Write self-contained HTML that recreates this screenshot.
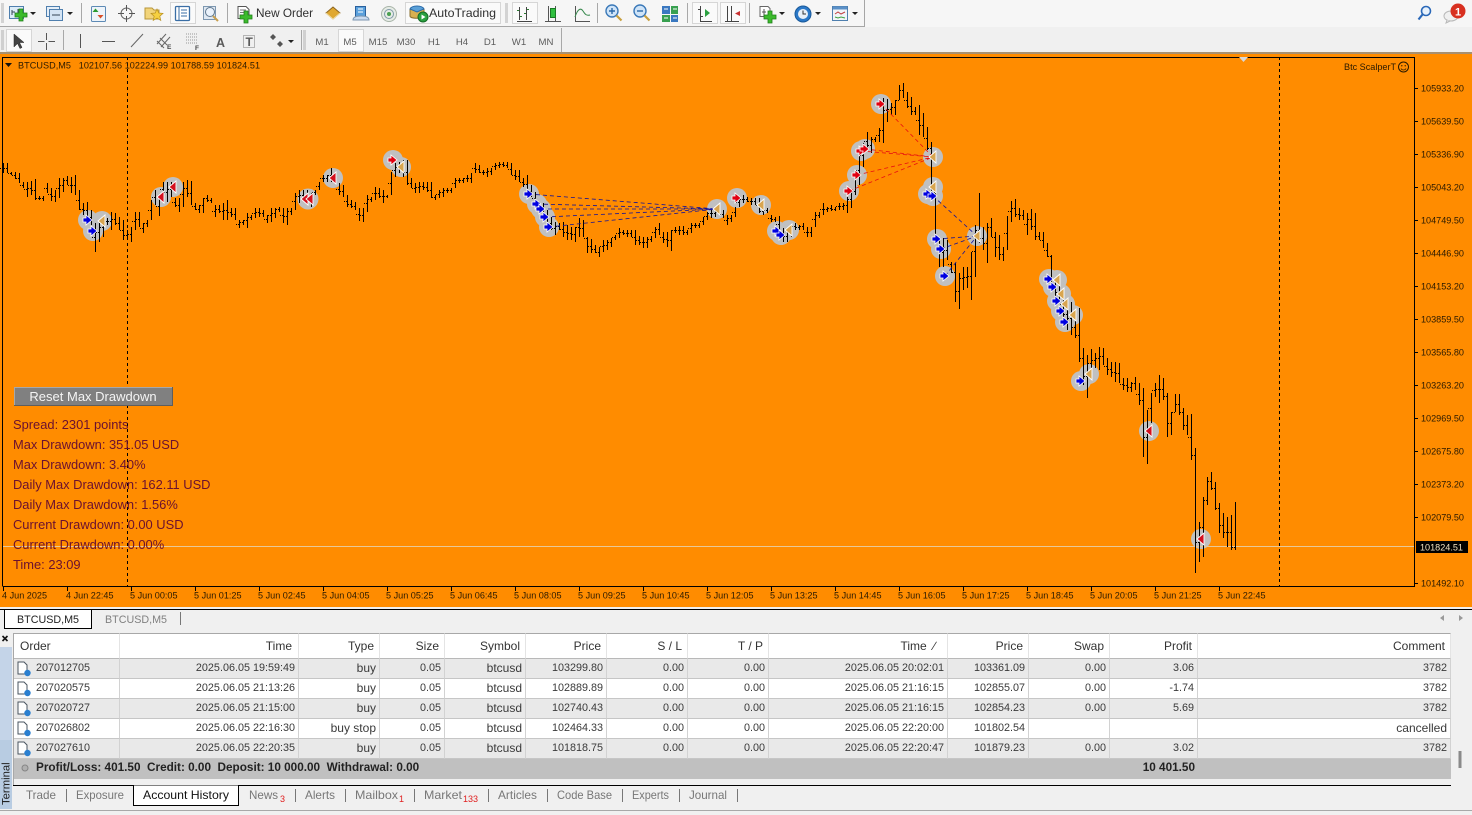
<!DOCTYPE html>
<html><head><meta charset="utf-8"><title>BTCUSD,M5</title>
<style>
html,body{margin:0;padding:0;width:1472px;height:815px;overflow:hidden;background:#f0f0f0;font-family:"Liberation Sans",Arial,sans-serif}
svg{position:absolute;left:0;top:0;display:block}
svg text{font-family:"Liberation Sans",Arial,sans-serif;white-space:pre}
.ax{font-size:9.1px;fill:#2a1a00}
.tf{font-size:9.6px;fill:#5c5c5c;text-anchor:middle}
.pn{font-size:12.9px;fill:#6a1030}
.tb{font-size:12px;fill:#777}
table{position:absolute;left:14px;top:633px;width:1437px;border-collapse:separate;border-spacing:0;table-layout:fixed;font-size:12px;color:#3a3a3a}
td,th{box-sizing:border-box;height:20px;padding:0 3px 0 0;text-align:right;font-weight:normal;border-right:1px solid #d2d2d2;border-bottom:1px solid #c6c6c6;white-space:pre;overflow:hidden;line-height:17px}
th{height:26px;background:#fff;border-top:1px solid #a8a8a8;border-right:1px solid #e4e4e4;border-bottom:1px solid #b8b8b8;padding-right:5px;color:#333;line-height:22px}
tr.g td{background:#e9e9e9}
tr.w td{background:#fff}
td.n{font-size:10.8px}
td.o{text-align:left;padding-left:22px;font-size:10.8px}
tr.s td{background:#c0c0c0;border:0;font-weight:bold;font-size:11.75px;color:#222;height:20px;line-height:18px;vertical-align:top}
</style></head><body>
<svg width="1472" height="815" viewBox="0 0 1472 815" xmlns="http://www.w3.org/2000/svg">
<defs>
<g id="ab"><path d="M-5-2h3v-3l6 5-6 5v-3h-3z" fill="#0000e0" stroke="#fff" stroke-width=".8"/></g>
<g id="ar"><path d="M-5-2h3v-3l6 5-6 5v-3h-3z" fill="#e00010" stroke="#fff" stroke-width=".8"/></g>
<g id="tt"><path d="M-4 0L3-6V6z" fill="#d8a550" stroke="#fff" stroke-width=".9"/></g>
<g id="tr"><path d="M-4 0L3-6V6z" fill="#d4101e" stroke="#fff" stroke-width=".9"/></g>
<g id="plus"><path d="M-2-6h4v4h4v4h-4v4h-4v-4h-4v-4h4z" fill="#3cbb2c" stroke="#1f7f1a" stroke-width=".8"/></g>
<g id="doc"><path d="M1 1h6l3 3v9H1z" fill="#fff" stroke="#4a5560"/><circle cx="10.500" cy="12" r="3.200" fill="#2a7fd0"/></g>
<g id="grip"><path d="M0 0h3M0 2h3M0 4h3M0 6h3M0 8h3M0 10h3M0 12h3M0 14h3M0 16h3M0 18h3" stroke="#b0b0b0" stroke-width="1"/></g>
<path id="lt" transform="translate(0,.5)" stroke="#000" fill="none" shape-rendering="crispEdges" d="M2 168h1M6 168h1M10 173h1M14 175h1M18 178h1M22 185h1M26 189h1M30 188h1M34 190h1M38 198h1M42 198h1M46 188h1M50 194h1M54 196h1M58 188h1M62 185h1M66 180h1M70 185h1M74 185h1M78 200h1M82 209h1M86 210h1M90 217h1M94 237h1M98 232h1M102 227h1M106 221h1M110 221h1M114 219h1M118 223h1M122 230h1M126 235h1M130 234h1M134 221h1M138 219h1M142 228h1M146 223h1M150 210h1M154 197h1M158 206h1M162 189h1M166 192h1M170 189h1M174 202h1M178 205h1M182 194h1M186 188h1M190 193h1M194 206h1M198 209h1M202 205h1M206 198h1M210 200h1M214 211h1M218 209h1M222 211h1M226 210h1M230 212h1M234 214h1M238 224h1M242 222h1M246 220h1M250 217h1M254 213h1M258 212h1M262 213h1M266 219h1M270 215h1M274 213h1M278 209h1M282 215h1M286 216h1M290 211h1M294 201h1M298 196h1M302 195h1M306 196h1M310 200h1M314 192h1M318 186h1M322 178h1M326 178h1M330 175h1M334 179h1M338 189h1M342 191h1M346 201h1M350 204h1M354 206h1M358 214h1M362 215h1M366 203h1M370 199h1M374 193h1M378 193h1M382 196h1M386 196h1M390 183h1M394 170h1M398 167h1M402 168h1M406 172h1M410 183h1M414 188h1M418 187h1M422 186h1M426 187h1M430 190h1M434 197h1M438 194h1M442 192h1M446 190h1M450 190h1M454 183h1M458 180h1M462 180h1M466 178h1M470 178h1M474 168h1M478 169h1M482 172h1M486 172h1M490 171h1M494 166h1M498 165h1M502 164h1M506 165h1M510 169h1M514 175h1M518 176h1M522 182h1M526 184h1M530 191h1M534 198h1M538 207h1M542 210h1M546 216h1M550 223h1M554 228h1M558 226h1M562 229h1M566 232h1M570 233h1M574 234h1M578 227h1M582 228h1M586 238h1M590 246h1M594 249h1M598 252h1M602 246h1M606 245h1M610 242h1M614 237h1M618 233h1M622 232h1M626 233h1M630 233h1M634 237h1M638 240h1M642 242h1M646 242h1M650 239h1M654 232h1M658 229h1M662 237h1M666 239h1M670 240h1M674 230h1M678 230h1M682 230h1M686 232h1M690 228h1M694 225h1M698 225h1M702 221h1M706 216h1M710 213h1M714 213h1M718 212h1M722 214h1M726 220h1M730 218h1M734 212h1M738 202h1M742 199h1M746 199h1M750 201h1M754 201h1M758 205h1M762 211h1M766 210h1M770 218h1M774 219h1M778 224h1M782 235h1M786 236h1M790 231h1M794 226h1M798 227h1M802 226h1M806 232h1M810 232h1M814 219h1M818 215h1M822 209h1M826 209h1M830 208h1M834 209h1M838 206h1M842 206h1M846 205h1M850 199h1M854 191h1M858 170h1M862 155h1M866 141h1M870 145h1M874 139h1M878 135h1M882 130h1M886 110h1M890 109h1M894 107h1M898 100h1M902 90h1M906 100h1M910 106h1M914 111h1M918 120h1M922 125h1M926 138h1M930 148h1M934 192h1M938 238h1M942 252h1M946 250h1M950 264h1M954 272h1M958 291h1M962 278h1M966 277h1M970 276h1M974 251h1M978 230h1M982 238h1M986 243h1M990 227h1M994 237h1M998 247h1M1002 254h1M1006 233h1M1010 211h1M1014 208h1M1018 214h1M1022 215h1M1026 224h1M1030 219h1M1034 226h1M1038 236h1M1042 240h1M1046 250h1M1050 256h1M1054 288h1M1058 292h1M1062 304h1M1066 314h1M1070 318h1M1074 327h1M1078 335h1M1082 358h1M1086 376h1M1090 363h1M1094 360h1M1098 358h1M1102 356h1M1106 366h1M1110 369h1M1114 372h1M1118 373h1M1122 384h1M1126 385h1M1130 387h1M1134 383h1M1138 394h1M1142 400h1M1146 437h1M1150 408h1M1154 390h1M1158 389h1M1162 389h1M1166 396h1M1170 423h1M1174 412h1M1178 404h1M1182 412h1M1186 425h1M1190 437h1M1194 455h1M1198 542h1M1202 527h1M1206 500h1M1210 481h1M1214 488h1M1218 508h1M1222 525h1M1226 532h1M1230 532h1M1234 547h1"/>
</defs>

<!-- toolbars -->
<rect x="0" y="0" width="1472" height="27" fill="#f6f6f6"/>
<rect x="0" y="27" width="1472" height="26" fill="#f0f0f0"/>
<path d="M0 26.500H864.500V0" fill="none" stroke="#a6a6a6"/>
<path d="M0 53h1472" stroke="#a89070" stroke-width="2"/>
<use href="#grip" x="1" y="4"/><use href="#grip" x="1" y="31"/><use href="#grip" x="505" y="4"/><use href="#grip" x="303" y="31"/>

<!-- pressed boxes -->
<g fill="#fafafa" stroke="#d6d6d6">
<rect x="170.500" y="2.500" width="25" height="21"/>
<rect x="405.500" y="2.500" width="95" height="21"/>
<rect x="512.500" y="2.500" width="25" height="21"/>
<rect x="692.500" y="2.500" width="25" height="21"/>
<rect x="720.500" y="2.500" width="25" height="21"/>
<rect x="6.500" y="29.500" width="25" height="22"/>
<rect x="338.500" y="29.500" width="25" height="22"/>
</g>
<!-- separators -->
<path d="M81.500 3v20M227.500 3v20M597.500 3v20M687.500 3v20M749.500 3v20M63.500 30v20M301.500 30v20M561.500 28v24" stroke="#a8a8a8"/>

<!-- row 1 icons -->
<g>
<rect x="9.500" y="6.500" width="14" height="12" fill="#dcecf8" stroke="#4f7fae"/><path d="M12 10v5M12 12h3M18 9v6M18 11h3" stroke="#345" fill="none"/><use href="#plus" x="21" y="15"/>
<path d="M30 12h6l-3 3z" fill="#222"/>
<rect x="46.500" y="6.500" width="13" height="10" fill="#e4eef8" stroke="#4f7fae"/><rect x="49.500" y="9.500" width="13" height="11" fill="#d4e4f4" stroke="#4f7fae"/><path d="M52 15h8" stroke="#345"/>
<path d="M67 12h6l-3 3z" fill="#222"/>
<rect x="91.500" y="6.500" width="14" height="15" rx="1" fill="#eef4fa" stroke="#5d8ab5"/><path d="M95.500 8.500l3 3.500h-6z" fill="#2a9a30"/><path d="M100.500 18.500l-3-3.500h6z" fill="#d8502a"/>
<circle cx="126.500" cy="13.500" r="5.500" fill="none" stroke="#666"/><path d="M126.500 5v6M126.500 16v6M118 13.500h6M129 13.500h6" stroke="#555"/>
<path d="M145 8h7l2 2h5v9h-14z" fill="#f2d47a" stroke="#b8963a"/><path d="M157 9l1.800 4 4.200.4-3.200 2.800 1 4.200-3.800-2.200-3.800 2.200 1-4.200-3.200-2.800 4.200-.4z" fill="#f6d040" stroke="#b89020" stroke-width=".7"/>
<rect x="175.500" y="6.500" width="14" height="14" rx="1" fill="#fff" stroke="#3a6ea5" stroke-width="1.300"/><path d="M179 7v13" stroke="#3a6ea5"/><path d="M181 10h6M181 13h6M181 16h6" stroke="#3a6ea5"/>
<rect x="203.500" y="6.500" width="12" height="13" fill="#dfe8f2" stroke="#7d97b0"/><circle cx="210" cy="12" r="4.500" fill="#eaf2fb" stroke="#60788f"/><path d="M213 16l5 5" stroke="#c8a050" stroke-width="2"/>
<path d="M238 6.500h8l3 3v9h-11z" fill="#fff" stroke="#555"/><path d="M240 10h6M240 12.500h6M240 15h4" stroke="#777"/><use href="#plus" x="246" y="17"/>
<path d="M326 13l7-6 7 6-7 6z" fill="#e0a830" stroke="#8a6420"/><path d="M326 13l7 6 7-6" fill="none" stroke="#f6e0a0"/>
<rect x="355.500" y="6.500" width="10" height="10" fill="#5aa0dc" stroke="#2a609c"/><path d="M358 9h5M358 12h5" stroke="#fff"/><path d="M353 20c0-3 4-4 8-4s8 1 8 4z" fill="#c8daf0" stroke="#7d97b0"/>
<circle cx="389" cy="14" r="7.500" fill="#e6ece6" stroke="#a8b4a8"/><circle cx="389" cy="14" r="4.500" fill="none" stroke="#8098a8"/><circle cx="389" cy="14" r="2" fill="#4aa050"/>
<path d="M410 10c0-4 14-4 14 0v6c0 3-14 3-14 0z" fill="#d8b050" stroke="#8a7030"/><path d="M410 9c2-4 12-4 14 0l-7 3z" fill="#5aa0d8" stroke="#2a6aa8"/><circle cx="423" cy="17" r="5" fill="#2aa040" stroke="#156a25"/><path d="M421.500 14.500v5l4-2.500z" fill="#fff"/>
<path d="M519.500 7v13M526.500 7v13M517 21.500h15" fill="none" stroke="#444"/><path d="M517 10.500h2M520 16.500h2M524 13.500h2M527 9.500h2" stroke="#2a7a30"/>
<path d="M548.500 6v15M555.500 6v15M545 21.500h16" fill="none" stroke="#555"/><rect x="550.500" y="8.500" width="5" height="9" fill="#30c040" stroke="#1a7a25"/>
<path d="M575.500 6v15.500H590" fill="none" stroke="#555"/><path d="M575 17c3-9 6-9 8-6s3 5 7 4" fill="none" stroke="#3a8a50"/>
<circle cx="612" cy="11" r="6" fill="#cfe4f8" stroke="#3a78b8" stroke-width="1.400"/><path d="M609 11h6M612 8v6" stroke="#2a68a8" stroke-width="1.400"/><path d="M616.500 15.500l5 5" stroke="#c8a040" stroke-width="2.200"/>
<circle cx="640" cy="11" r="6" fill="#cfe4f8" stroke="#3a78b8" stroke-width="1.400"/><path d="M637 11h6" stroke="#2a68a8" stroke-width="1.400"/><path d="M644.500 15.500l5 5" stroke="#c8a040" stroke-width="2.200"/>
<rect x="662" y="6" width="8" height="8" fill="#3a78c0"/><rect x="671" y="6" width="7" height="8" fill="#38a050"/><rect x="662" y="15" width="8" height="7" fill="#38a050"/><rect x="671" y="15" width="7" height="7" fill="#3a78c0"/><path d="M664 9h4M673 9h4M664 18h4M673 18h4" stroke="#fff"/>
<path d="M700.500 6v15.500H712" fill="none" stroke="#444"/><path d="M698 9.500h2M701 16.500h2" stroke="#444"/><path d="M705 9v8l5-4z" fill="#2aa040"/>
<path d="M727.500 6v15M731.500 6v15M725 21.500h14" fill="none" stroke="#444"/><path d="M740 11l-5 2.500 5 2.500z" fill="#c83030"/>
<path d="M760 6.500h8l2 2v8h-10z" fill="#fff" stroke="#666"/><path d="M764 9v7M762 12h4" stroke="#555"/><use href="#plus" x="770" y="17"/>
<path d="M779 12h6l-3 3z" fill="#222"/>
<circle cx="803" cy="14" r="8" fill="#2a78c8" stroke="#1a5a9a"/><circle cx="803" cy="14" r="5" fill="#e8f0f8"/><path d="M803 10.500V14h3" fill="none" stroke="#333"/>
<path d="M815 12h6l-3 3z" fill="#222"/>
<rect x="832.500" y="6.500" width="15" height="14" fill="#f0f4f8" stroke="#4f7fae"/><path d="M833 8h14" stroke="#5a90c8" stroke-width="3"/><path d="M835 14l3-2 3 2 4-2" stroke="#c04040" fill="none"/><path d="M835 17l3 1 3-1 4 1" stroke="#40a040" fill="none"/>
<path d="M852 12h6l-3 3z" fill="#222"/>
<circle cx="1426" cy="11" r="4.500" fill="#e8f2fc" stroke="#2a68b8" stroke-width="1.600"/><path d="M1422.500 14.500l-4 5" stroke="#2a68b8" stroke-width="2.200"/>
<ellipse cx="1451" cy="16" rx="7" ry="5" fill="#f0f0f0" stroke="#b8b8b8"/><path d="M1447 20l-1 3 4-2" fill="#e8e8e8" stroke="#b8b8b8"/>
<circle cx="1458" cy="11" r="7.500" fill="#d83020"/>
</g>
<text x="1458" y="15.500" font-size="11" fill="#fff" text-anchor="middle" font-weight="bold">1</text>
<text x="256" y="17" font-size="12.300" fill="#303030" textLength="57" lengthAdjust="spacingAndGlyphs">New Order</text>
<text x="429" y="17" font-size="12.300" fill="#303030" textLength="67" lengthAdjust="spacingAndGlyphs">AutoTrading</text>

<!-- row 2 icons -->
<path d="M14 34v13l3.500-3.500 2.500 5 2-1-2.500-5H24z" fill="#444" stroke="#222" stroke-width=".5"/>
<path d="M46.500 33v7M46.500 43v7M38 41.500h6.500M48.500 41.500H55" stroke="#555"/>
<path d="M80.500 34v14" stroke="#555"/>
<path d="M102 41.500h13" stroke="#555"/>
<path d="M131 47l12-13" stroke="#666"/>
<path d="M157 44l9-10M161 47l9-10M160 38l7 7M157 41l7 7" stroke="#666" fill="none"/><text x="167" y="49" font-size="6.500" font-weight="bold" fill="#444">E</text>
<path d="M186 34h12M186 37h12M186 40h12M186 43h12" stroke="#999" stroke-dasharray="1 1"/><text x="195" y="50" font-size="6.500" font-weight="bold" fill="#444">F</text>
<text x="216" y="47" font-size="12.500" font-weight="bold" fill="#5a5a5a">A</text>
<rect x="243.500" y="35.500" width="11" height="12" fill="none" stroke="#777" stroke-dasharray="1 1"/><text x="245.500" y="46" font-size="12" font-weight="bold" fill="#5a5a5a">T</text>
<path d="M270 37l3-3 3 3-3 3zM277 44l3-3 3 3-3 3z" fill="#555"/>
<path d="M288 40h6l-3 3z" fill="#222"/>
<text class="tf" x="322" y="45">M1</text><text class="tf" x="350" y="45">M5</text><text class="tf" x="378" y="45">M15</text><text class="tf" x="406" y="45">M30</text><text class="tf" x="434" y="45">H1</text><text class="tf" x="462" y="45">H4</text><text class="tf" x="490" y="45">D1</text><text class="tf" x="519" y="45">W1</text><text class="tf" x="546" y="45">MN</text>

<!-- chart -->
<rect x="0" y="54" width="1472" height="553" fill="#ff8c00"/>
<g fill="#c0c0c0">
<circle cx="88" cy="220" r="10"/><circle cx="93" cy="231" r="10"/><circle cx="102" cy="221" r="10"/>
<circle cx="161" cy="197" r="10"/><circle cx="173" cy="187" r="10"/><circle cx="308" cy="199" r="10.500"/><circle cx="333" cy="178" r="10"/>
<circle cx="393" cy="160" r="10"/><circle cx="401" cy="167" r="10"/>
<circle cx="529" cy="194" r="10"/><circle cx="537" cy="204" r="10"/><circle cx="541" cy="209" r="10"/><circle cx="545" cy="217" r="10"/><circle cx="549" cy="227" r="10"/>
<circle cx="717" cy="209" r="10"/><circle cx="737" cy="198" r="10"/><circle cx="761" cy="205" r="10"/><circle cx="777" cy="231" r="10"/><circle cx="781" cy="235" r="10"/><circle cx="789" cy="230" r="10"/>
<circle cx="849" cy="191" r="10"/><circle cx="857" cy="175" r="10"/><circle cx="861" cy="151" r="10"/><circle cx="865" cy="149" r="10"/><circle cx="881" cy="104" r="10"/>
<circle cx="933" cy="157" r="10"/><circle cx="933" cy="187" r="10"/><circle cx="928" cy="194" r="10"/><circle cx="933" cy="196" r="10"/>
<circle cx="937" cy="239" r="10"/><circle cx="941" cy="249" r="10"/><circle cx="945" cy="276" r="10"/><circle cx="977" cy="236" r="10"/>
<circle cx="1049" cy="279" r="10"/><circle cx="1057" cy="280" r="10"/><circle cx="1053" cy="287" r="10"/><circle cx="1061" cy="294" r="10"/><circle cx="1057" cy="301" r="10"/><circle cx="1065" cy="304" r="10"/><circle cx="1061" cy="311" r="10"/><circle cx="1073" cy="315" r="10"/><circle cx="1065" cy="322" r="10"/>
<circle cx="1081" cy="381" r="10"/><circle cx="1089" cy="374" r="10"/><circle cx="1149" cy="431" r="10"/><circle cx="1201" cy="539" r="10"/>
</g>
<path d="M3 546.500H1414" stroke="#e8c898"/>
<!-- bar verticals -->
<path transform="translate(.5,0)" stroke="#000" fill="none" shape-rendering="crispEdges" d="M3 163V173M7 163V173M11 172V175M15 172V179M19 173V183M23 182V188M27 182V197M31 181V195M35 179V200M39 196V200M43 196V201M47 183V193M51 188V201M55 190V202M59 178V198M63 178V192M67 176V185M71 177V193M75 175V195M79 190V210M83 203V215M87 202V218M91 210V225M95 223V252M99 223V242M103 217V237M107 218V225M111 212V230M115 213V225M119 217V230M123 220V240M127 230V240M131 227V242M135 212V230M139 212V227M143 223V233M147 220V227M151 200V220M155 190V205M159 197V216M163 182V197M167 182V202M171 182V197M175 198V207M179 198V212M183 182V207M187 180V197M191 181V205M195 203V210M199 205V213M203 198V213M207 195V202M211 198V203M215 205V217M219 205V213M223 203V220M227 200V220M231 208V217M235 208V220M239 220V228M243 220V225M247 213V228M251 215V220M255 208V218M259 208V217M263 210V217M267 215V223M271 208V222M275 208V218M279 207V212M283 208V223M287 208V225M291 208V215M295 193V210M299 190V203M303 190V200M307 190V203M311 193V207M315 190V195M319 182V190M323 175V182M327 175V182M331 168V182M335 175V183M339 183V195M343 185V197M347 195V207M351 200V208M355 202V210M359 208V221M363 208V222M367 195V212M371 197V202M375 187V200M379 188V198M383 190V203M387 195V198M391 172V195M395 163V177M399 162V173M403 160V177M407 160V185M411 178V188M415 183V193M419 182V193M423 182V190M427 182V192M431 182V198M435 195V200M439 190V198M443 188V197M447 188V193M451 188V193M455 178V188M459 178V183M463 178V183M467 175V182M471 173V183M475 163V173M479 165V173M483 170V175M487 168V177M491 168V175M495 163V170M499 162V168M503 162V167M507 162V168M511 163V175M515 170V180M519 170V182M523 178V187M527 175V193M531 185V197M535 192V205M539 202V212M543 203V217M547 210V222M551 217V230M555 222V235M559 223V230M563 222V237M567 225V240M571 227V240M575 227V242M579 218V237M583 220V237M587 237V253M591 239V253M595 245V253M599 247V257M603 240V252M607 240V250M611 238V247M615 235V240M619 228V238M623 230V235M627 230V237M631 230V237M635 230V245M639 236V245M643 237V248M647 237V248M651 236V242M655 227V238M659 223V235M663 232V243M667 232V247M671 230V251M675 227V233M679 226V235M683 226V235M687 230V235M691 223V233M695 223V228M699 223V228M703 217V225M707 212V220M711 209V218M715 210V217M719 210V215M723 210V218M727 215V225M731 215V222M735 207V217M739 198V207M743 195V203M747 197V202M751 198V205M755 198V205M759 198V213M763 208V215M767 208V213M771 215V222M775 217V222M779 216V232M783 228V242M787 230V242M791 225V237M795 223V230M799 225V230M803 223V230M807 227V237M811 227V237M815 212V227M819 212V218M823 203V215M827 207V212M831 205V211M835 207V211M839 203V210M843 203V210M847 197V213M851 190V208M855 173V195M859 155V185M863 143V167M867 132V150M871 137V153M875 137V142M879 128V142M883 98V143M887 99V122M891 103V115M895 100V115M899 85V100M903 83V98M907 92V108M911 97V115M915 107V115M919 105V135M923 113V137M927 127V150M931 142V192M935 192V238M939 238V267M943 238V267M947 240V260M951 262V273M955 263V302M959 273V309M963 267V290M967 267V288M971 252V300M975 225V277M979 193V243M983 227V250M987 223V263M991 218V237M995 232V257M999 235V260M1003 247V261M1007 216V250M1011 201V222M1015 199V217M1019 208V220M1023 210V220M1027 213V235M1031 209V230M1035 213V240M1039 232V240M1043 232V248M1047 243V257M1051 255V287M1055 280V297M1059 285V300M1063 292V317M1067 298V330M1071 302V335M1075 317V338M1079 308V362M1083 348V385M1087 355V398M1091 349V378M1095 353V368M1099 347V370M1103 348V365M1107 358V375M1111 362V377M1115 362V382M1119 363V383M1123 378V390M1127 378V392M1131 382V392M1135 377V390M1139 383V405M1143 388V457M1147 410V464M1151 393V423M1155 383V397M1159 375V403M1163 378V400M1167 393V437M1171 412V435M1175 394V412M1179 394V415M1183 408V430M1187 415V435M1191 414V460M1195 448V573M1199 522V562M1203 497V557M1207 477V505M1211 472V490M1215 482V510M1219 503V533M1223 513V538M1227 517V547M1231 515V550M1235 502V550"/>
<!-- bar ticks: left (open) and right (close = next open) -->
<use href="#lt"/>
<use href="#lt" x="-2"/>
<!-- dashed trades -->
<g fill="none" stroke-dasharray="4 3" stroke-width=".8">
<path stroke="#10109a" d="M529 194L717 209M537 204L717 209M541 209L717 209M545 217L717 209M549 227L717 209M933 196L977 236M937 239L977 236M941 249L977 236M945 276L977 236"/>
<path stroke="#e81010" d="M881 104L933 157M861 151L933 157M865 149L933 157M857 175L933 157M849 191L933 157"/>
</g>
<!-- markers -->
<use href="#ab" x="88" y="220"/><use href="#ab" x="93" y="231"/><use href="#tt" x="102" y="221"/>
<use href="#tr" x="161" y="197"/><use href="#tr" x="173" y="187"/><use href="#tr" x="305" y="199"/><use href="#tr" x="310" y="199"/><use href="#tr" x="333" y="178"/>
<use href="#ar" x="393" y="160"/><use href="#tt" x="401" y="167"/>
<use href="#ab" x="529" y="194"/><use href="#ab" x="537" y="204"/><use href="#ab" x="541" y="209"/><use href="#ab" x="545" y="217"/><use href="#ab" x="549" y="227"/>
<use href="#tt" x="717" y="209"/><use href="#ar" x="737" y="198"/><use href="#tt" x="761" y="205"/><use href="#ab" x="777" y="231"/><use href="#ab" x="781" y="235"/><use href="#tt" x="789" y="230"/>
<use href="#ar" x="849" y="191"/><use href="#ar" x="857" y="175"/><use href="#ar" x="861" y="151"/><use href="#ar" x="865" y="149"/><use href="#ar" x="881" y="104"/>
<use href="#tt" x="933" y="157"/><use href="#tt" x="933" y="187"/><use href="#ab" x="928" y="194"/><use href="#ab" x="933" y="196"/>
<use href="#ab" x="937" y="239"/><use href="#ab" x="941" y="249"/><use href="#ab" x="945" y="276"/><use href="#tt" x="977" y="236"/>
<use href="#ab" x="1049" y="279"/><use href="#tt" x="1057" y="280"/><use href="#ab" x="1053" y="287"/><use href="#tt" x="1061" y="294"/><use href="#ab" x="1057" y="301"/><use href="#tt" x="1065" y="304"/><use href="#ab" x="1061" y="311"/><use href="#tt" x="1073" y="315"/><use href="#ab" x="1065" y="322"/>
<use href="#ab" x="1081" y="381"/><use href="#tt" x="1089" y="374"/><use href="#tr" x="1149" y="431"/><use href="#tr" x="1201" y="539"/>

<!-- frame -->
<path d="M2.500 586V57.500H1414.500V586.500H2.500" fill="none" stroke="#000" shape-rendering="crispEdges"/>
<path d="M127.500 57V586M1279.500 57V586" stroke="#000" stroke-dasharray="3 3"/>
<path d="M1239 57h9l-4.500 5z" fill="#d8d8d8"/>
<path d="M1415 88.500h3M1415 121.500h3M1415 154.500h3M1415 187.500h3M1415 220.500h3M1415 253.500h3M1415 286.500h3M1415 319.500h3M1415 352.500h3M1415 385.500h3M1415 418.500h3M1415 451.500h3M1415 484.500h3M1415 517.500h3M1415 583.500h3" stroke="#000"/>
<path d="M3.500 587v4M67.500 587v4M131.500 587v4M195.500 587v4M259.500 587v4M323.500 587v4M387.500 587v4M451.500 587v4M515.500 587v4M579.500 587v4M643.500 587v4M707.500 587v4M771.500 587v4M835.500 587v4M899.500 587v4M963.500 587v4M1027.500 587v4M1091.500 587v4M1155.500 587v4M1219.500 587v4" stroke="#000"/>
<path d="M5 63h7l-3.500 4z" fill="#111"/>
<text class="ax" x="18" y="68.500" textLength="242" lengthAdjust="spacing">BTCUSD,M5   102107.56 102224.99 101788.59 101824.51</text>
<text class="ax" x="1344" y="70">Btc ScalperT</text>
<circle cx="1403.500" cy="67" r="5" fill="none" stroke="#2a1a00"/><circle cx="1401.800" cy="65.800" r=".7" fill="#2a1a00"/><circle cx="1405.200" cy="65.800" r=".7" fill="#2a1a00"/><path d="M1401 68.500c1 2 4 2 5 0" fill="none" stroke="#2a1a00" stroke-width=".8"/>
<text class="ax" x="1421" y="91.500">105933.20</text><text class="ax" x="1421" y="124.500">105639.50</text><text class="ax" x="1421" y="157.500">105336.90</text><text class="ax" x="1421" y="190.500">105043.20</text><text class="ax" x="1421" y="223.500">104749.50</text><text class="ax" x="1421" y="256.500">104446.90</text><text class="ax" x="1421" y="289.500">104153.20</text><text class="ax" x="1421" y="322.500">103859.50</text><text class="ax" x="1421" y="355.500">103565.80</text><text class="ax" x="1421" y="388.500">103263.20</text><text class="ax" x="1421" y="421.500">102969.50</text><text class="ax" x="1421" y="454.500">102675.80</text><text class="ax" x="1421" y="487.500">102373.20</text><text class="ax" x="1421" y="520.500">102079.50</text><text class="ax" x="1421" y="586.500">101492.10</text>
<rect x="1416" y="541" width="52" height="12" fill="#000"/>
<text x="1420" y="550.500" font-size="9.100" fill="#f0e0c0">101824.51</text>
<text class="ax" x="2" y="598.500">4 Jun 2025</text><text class="ax" x="66" y="598.500">4 Jun 22:45</text><text class="ax" x="130" y="598.500">5 Jun 00:05</text><text class="ax" x="194" y="598.500">5 Jun 01:25</text><text class="ax" x="258" y="598.500">5 Jun 02:45</text><text class="ax" x="322" y="598.500">5 Jun 04:05</text><text class="ax" x="386" y="598.500">5 Jun 05:25</text><text class="ax" x="450" y="598.500">5 Jun 06:45</text><text class="ax" x="514" y="598.500">5 Jun 08:05</text><text class="ax" x="578" y="598.500">5 Jun 09:25</text><text class="ax" x="642" y="598.500">5 Jun 10:45</text><text class="ax" x="706" y="598.500">5 Jun 12:05</text><text class="ax" x="770" y="598.500">5 Jun 13:25</text><text class="ax" x="834" y="598.500">5 Jun 14:45</text><text class="ax" x="898" y="598.500">5 Jun 16:05</text><text class="ax" x="962" y="598.500">5 Jun 17:25</text><text class="ax" x="1026" y="598.500">5 Jun 18:45</text><text class="ax" x="1090" y="598.500">5 Jun 20:05</text><text class="ax" x="1154" y="598.500">5 Jun 21:25</text><text class="ax" x="1218" y="598.500">5 Jun 22:45</text>
<!-- EA panel -->
<rect x="14" y="387" width="159" height="19" fill="#808080"/>
<path d="M14.500 406V387.500H173" fill="none" stroke="#a8a8a8"/><path d="M14 405.500H172.500V387" fill="none" stroke="#5e5e5e"/>
<text x="93" y="401" font-size="13" fill="#f4f4f4" text-anchor="middle">Reset Max Drawdown</text>
<text class="pn" x="13" y="429">Spread: 2301 points</text>
<text class="pn" x="13" y="449">Max Drawdown: 351.05 USD</text>
<text class="pn" x="13" y="469">Max Drawdown: 3.40%</text>
<text class="pn" x="13" y="489">Daily Max Drawdown: 162.11 USD</text>
<text class="pn" x="13" y="509">Daily Max Drawdown: 1.56%</text>
<text class="pn" x="13" y="529">Current Drawdown: 0.00 USD</text>
<text class="pn" x="13" y="549">Current Drawdown: 0.00%</text>
<text class="pn" x="13" y="569">Time: 23:09</text>

<!-- chart tabs -->
<rect x="0" y="607" width="1472" height="208" fill="#f0f0f0"/>
<rect x="4" y="609" width="88" height="19" fill="#fff"/>
<path d="M0 609.500H1472M4.500 609V628.500H91.500V609" fill="none" stroke="#000"/>
<text x="17" y="623" font-size="11.200" fill="#222" textLength="62" lengthAdjust="spacingAndGlyphs">BTCUSD,M5</text>
<text x="105" y="623" font-size="11.200" fill="#808080" textLength="62" lengthAdjust="spacingAndGlyphs">BTCUSD,M5</text>
<path d="M180.500 612v13" stroke="#777"/>
<path d="M1444 615v6l-4-3zM1459 615v6l4-3z" fill="#9a9a9a"/>

<!-- terminal -->
<rect x="0" y="647" width="12" height="162" fill="#c4d4e8"/>
<rect x="0" y="740" width="12" height="69" fill="#b8cce2"/>
<path d="M2.500 636l5 5M7.500 636l-5 5" stroke="#111" stroke-width="1.600"/>
<text transform="translate(9.500,805) rotate(-90)" font-size="11.300" fill="#222">Terminal</text>
<path d="M13.500 633V785" stroke="#a8a8a8"/>
<path d="M1460 751v17" stroke="#8a8a8a" stroke-width="3"/>

<!-- bottom tabs -->
<path d="M13 785.500H1451" stroke="#000"/>
<path d="M133.500 785.500V805.500H238.500V785.500" fill="#fff" stroke="#000"/>
<path d="M0 810.500H1472" stroke="#a8a8a8"/>
<text class="tb" x="26" y="799" textLength="30" lengthAdjust="spacingAndGlyphs">Trade</text><text class="tb" x="76" y="799" textLength="48" lengthAdjust="spacingAndGlyphs">Exposure</text>
<text x="143" y="799" font-size="12" fill="#111" textLength="86" lengthAdjust="spacingAndGlyphs">Account History</text>
<text class="tb" x="249" y="799" textLength="29" lengthAdjust="spacingAndGlyphs">News</text><text x="280" y="802" font-size="9" fill="#e02020">3</text>
<text class="tb" x="305" y="799" textLength="30" lengthAdjust="spacingAndGlyphs">Alerts</text><text class="tb" x="355" y="799" textLength="43" lengthAdjust="spacingAndGlyphs">Mailbox</text><text x="399" y="802" font-size="9" fill="#e02020">1</text>
<text class="tb" x="424" y="799" textLength="38" lengthAdjust="spacingAndGlyphs">Market</text><text x="463" y="802" font-size="9" fill="#e02020">133</text>
<text class="tb" x="498" y="799" textLength="39" lengthAdjust="spacingAndGlyphs">Articles</text><text class="tb" x="557" y="799" textLength="55" lengthAdjust="spacingAndGlyphs">Code Base</text><text class="tb" x="632" y="799" textLength="37" lengthAdjust="spacingAndGlyphs">Experts</text><text class="tb" x="689" y="799" textLength="38" lengthAdjust="spacingAndGlyphs">Journal</text>
<path d="M66.500 789v13M295.500 789v13M345.500 789v13M414.500 789v13M488.500 789v13M547.500 789v13M622.500 789v13M679.500 789v13M737.500 789v13" stroke="#777"/>
</svg>

<table>
<colgroup><col style="width:106px"><col style="width:179px"><col style="width:81px"><col style="width:65px"><col style="width:81px"><col style="width:81px"><col style="width:81px"><col style="width:81px"><col style="width:179px"><col style="width:81px"><col style="width:81px"><col style="width:88px"><col style="width:253px"></colgroup>
<tr><th style="text-align:left;padding-left:6px">Order</th><th style="padding-right:6px">Time</th><th>Type</th><th>Size</th><th>Symbol</th><th>Price</th><th>S / L</th><th>T / P</th><th style="padding-right:5px">Time  ∕  </th><th>Price</th><th>Swap</th><th>Profit</th><th>Comment</th></tr>
<tr class="g"><td class="o">207012705</td><td class="n">2025.06.05 19:59:49</td><td>buy</td><td class="n">0.05</td><td>btcusd</td><td class="n">103299.80</td><td class="n">0.00</td><td class="n">0.00</td><td class="n">2025.06.05 20:02:01</td><td class="n">103361.09</td><td class="n">0.00</td><td class="n">3.06</td><td class="n">3782</td></tr>
<tr class="w"><td class="o">207020575</td><td class="n">2025.06.05 21:13:26</td><td>buy</td><td class="n">0.05</td><td>btcusd</td><td class="n">102889.89</td><td class="n">0.00</td><td class="n">0.00</td><td class="n">2025.06.05 21:16:15</td><td class="n">102855.07</td><td class="n">0.00</td><td class="n">-1.74</td><td class="n">3782</td></tr>
<tr class="g"><td class="o">207020727</td><td class="n">2025.06.05 21:15:00</td><td>buy</td><td class="n">0.05</td><td>btcusd</td><td class="n">102740.43</td><td class="n">0.00</td><td class="n">0.00</td><td class="n">2025.06.05 21:16:15</td><td class="n">102854.23</td><td class="n">0.00</td><td class="n">5.69</td><td class="n">3782</td></tr>
<tr class="w"><td class="o">207026802</td><td class="n">2025.06.05 22:16:30</td><td>buy stop</td><td class="n">0.05</td><td>btcusd</td><td class="n">102464.33</td><td class="n">0.00</td><td class="n">0.00</td><td class="n">2025.06.05 22:20:00</td><td class="n">101802.54</td><td class="n"></td><td class="n"></td><td>cancelled</td></tr>
<tr class="g"><td class="o">207027610</td><td class="n">2025.06.05 22:20:35</td><td>buy</td><td class="n">0.05</td><td>btcusd</td><td class="n">101818.75</td><td class="n">0.00</td><td class="n">0.00</td><td class="n">2025.06.05 22:20:47</td><td class="n">101879.23</td><td class="n">0.00</td><td class="n">3.02</td><td class="n">3782</td></tr>
<tr class="s"><td colspan="11" style="text-align:left;padding-left:22px">Profit/Loss: 401.50  Credit: 0.00  Deposit: 10 000.00  Withdrawal: 0.00</td><td>10 401.50</td><td></td></tr>
</table>

<svg width="1472" height="815" viewBox="0 0 1472 815" xmlns="http://www.w3.org/2000/svg" style="pointer-events:none">
<use href="#doc" x="17" y="661"/><use href="#doc" x="17" y="681"/><use href="#doc" x="17" y="701"/><use href="#doc" x="17" y="721"/><use href="#doc" x="17" y="741"/>
<circle cx="25" cy="768" r="3" fill="#b0b0b0" stroke="#858585"/>
</svg>
</body></html>
